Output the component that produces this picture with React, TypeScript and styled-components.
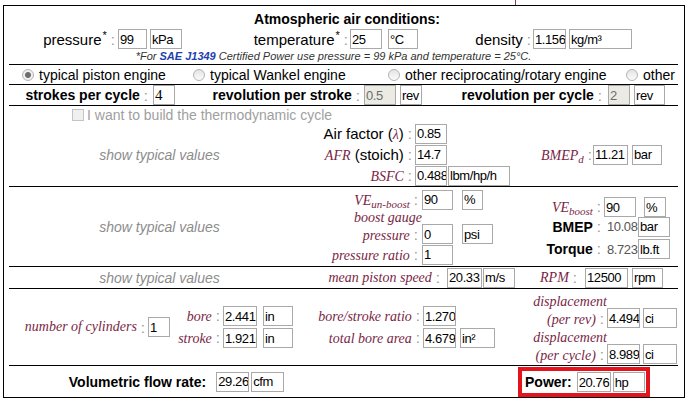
import React from 'react';
import styled, { createGlobalStyle } from 'styled-components';

const SANS = `'Liberation Sans', Arial, sans-serif`;
const SERIF = `'Liberation Serif', 'Times New Roman', serif`;
const MAROON = '#7a1f45';

const GlobalStyle = createGlobalStyle`
  html, body { margin: 0; padding: 0; background: #fff; }
  body { font-family: ${SANS}; font-size: 15px; color: #000; }
`;

const Frame = styled.div`
  position: relative;
  box-sizing: border-box;
  width: 682px;
  height: 393px;
  margin: 5px 0 0 3px;
  padding: 0 6px 0 5px;
  border: 1px solid #000;

  &::before {
    content: '';
    position: absolute;
    left: 511px;
    top: -6px;
    width: 1px;
    height: 5px;
    background: #8a3a62;
  }
`;

const Section = styled.section<{ $h: number; $last?: boolean }>`
  box-sizing: border-box;
  height: ${p => p.$h}px;
  border-bottom: ${p => (p.$last ? 'none' : '1px solid #000')};
`;

const Cols = styled.div<{ $cols: string; $h?: number; $pad?: number }>`
  display: grid;
  grid-template-columns: ${p => p.$cols};
  height: ${p => (p.$h ? `${p.$h}px` : '100%')};
  padding-left: ${p => p.$pad ?? 0}px;
  align-items: center;
`;

/* text pieces */
const Plain = styled.span`
  font: 15px ${SANS};
  color: #000;
`;
const B = styled.span`
  font: bold 14px ${SANS};
  color: #000;
`;
const M = styled.span`
  font: italic 14px ${SERIF};
  color: ${MAROON};
`;
const MSub = styled.sub`
  font-size: 11px;
  vertical-align: -3px;
  line-height: 0;
`;
const Star = styled.sup`
  font-size: 11px;
  vertical-align: 6px;
  line-height: 0;
  margin-left: 1px;
`;
const Colon = styled.span<{ $mr?: number }>`
  font: 15px ${SANS};
  color: #999;
  margin: 0 ${p => p.$mr ?? 3}px 0 4px;
`;
const Num = styled.span`
  display: inline-block;
  width: 31px;
  padding-left: 3px;
  font: 13px ${SANS};
  letter-spacing: -0.4px;
  color: #555;
`;

const Box = styled.input<{ $w: number; $ml?: number; $off?: boolean; $serif?: boolean }>`
  box-sizing: border-box;
  width: ${p => p.$w}px;
  height: 20px;
  margin: 0 0 0 ${p => p.$ml ?? 0}px;
  padding: 0 0 0 1px;
  border: 1px solid #a9a9a9;
  border-radius: 0;
  background: ${p => (p.$off ? '#ebebe4' : '#fff')};
  color: ${p => (p.$off ? '#6d6d6d' : '#000')};
  font: ${p => (p.$serif ? `15px ${SERIF}` : `13px ${SANS}`)};
  letter-spacing: ${p => (p.$serif ? 0 : -0.4)}px;
  outline: none;
`;

type ValProps = { v: string; w: number; ml?: number; off?: boolean; serif?: boolean };
const Val = ({ v, w, ml, off, serif }: ValProps) => (
  <Box readOnly value={v} $w={w} $ml={ml} $off={off} $serif={serif} />
);

/* a label + inputs, anchored in its cell */
const Field = styled.div<{ $align?: 'flex-end' | 'center' | 'flex-start'; $pr?: number }>`
  display: flex;
  align-items: center;
  justify-content: ${p => p.$align ?? 'flex-end'};
  padding-right: ${p => p.$pr ?? 0}px;
  white-space: nowrap;
`;

/* stacked fields with a right-aligned label column */
const Stack = styled.div<{ $label: number; $rows: string; $top?: number }>`
  display: grid;
  grid-template-columns: ${p => p.$label}px auto;
  grid-template-rows: ${p => p.$rows};
  align-items: center;
  align-self: ${p => (p.$top !== undefined ? 'start' : 'center')};
  margin-top: ${p => p.$top ?? 0}px;
`;
const SLabel = styled.div<{ $end?: boolean }>`
  text-align: right;
  line-height: 18px;
  white-space: nowrap;
  align-self: ${p => (p.$end ? 'end' : 'center')};
`;
const SVal = styled.div<{ $end?: boolean }>`
  display: flex;
  align-items: center;
  align-self: ${p => (p.$end ? 'end' : 'center')};
`;

/* atmosphere block */
const Atmos = styled.div`
  display: flex;
  flex-direction: column;
  align-items: center;
  padding-top: 4px;
`;
const Title = styled.div`
  font: bold 14px ${SANS};
  line-height: 18px;
  margin-left: 7px;
`;
const AtmosRow = styled.div`
  align-self: stretch;
  display: grid;
  grid-template-columns: 173px 236px 214px;
  height: 22px;
  align-items: center;
`;
const Note = styled.div`
  font: italic 11px ${SANS};
  line-height: 12px;
  color: #333;
  margin-right: 20px;
`;
const NoteLink = styled.span`
  color: #1f3fae;
  font-weight: bold;
`;

/* engine type radios */
const RadioItem = styled.label`
  display: flex;
  align-items: center;
  font: 14px ${SANS};
  white-space: nowrap;
`;
const Dot = styled.span<{ $on?: boolean }>`
  box-sizing: border-box;
  width: 12px;
  height: 12px;
  margin-right: 5px;
  border-radius: 50%;
  border: 1px solid #b4b4b4;
  background: ${p =>
    p.$on
      ? 'radial-gradient(circle, #6e6e6e 0 2.5px, #f0f0f0 3.5px)'
      : 'linear-gradient(#e4e4e4, #fbfbfb)'};
`;

const CheckRow = styled.div`
  display: flex;
  align-items: center;
  height: 17px;
  padding-left: 63px;
  font: 14px ${SANS};
  color: #a0a0a0;
`;
const CheckBox = styled.span`
  box-sizing: border-box;
  width: 12px;
  height: 12px;
  margin-right: 3px;
  border: 1px solid #c4c4c4;
  background: #f0f0f0;
`;

const Show = styled.div`
  font: italic 14px ${SANS};
  color: #8c8c8c;
  text-align: center;
  padding-right: 10px;
`;

const PowerBox = styled.div`
  box-sizing: border-box;
  justify-self: end;
  align-self: start;
  display: flex;
  align-items: center;
  width: 132px;
  height: 30px;
  margin: 1px 28px 0 0;
  padding-left: 3px;
  border: 4px solid #e3141b;
`;

const radios = [
  { text: 'typical piston engine', on: true },
  { text: 'typical Wankel engine' },
  { text: 'other reciprocating/rotary engine' },
  { text: 'other' },
];

export default function App() {
  return (
    <>
      <GlobalStyle />
      <Frame>
        <Section $h={59}>
          <Atmos>
            <Title>Atmospheric air conditions:</Title>
            <AtmosRow>
              <Field>
                <Plain>pressure<Star>*</Star></Plain>
                <Colon>:</Colon>
                <Val v="99" w={29} />
                <Val v="kPa" w={32} ml={3} />
              </Field>
              <Field>
                <Plain>temperature<Star>*</Star></Plain>
                <Colon $mr={2}>:</Colon>
                <Val v="25" w={32} />
                <Val v="°C" w={30} ml={6} />
              </Field>
              <Field>
                <Plain>density</Plain>
                <Colon $mr={2}>:</Colon>
                <Val v="1.156" w={33} />
                <Val v="kg/m³" w={63} ml={3} />
              </Field>
            </AtmosRow>
            <Note>
              *For <NoteLink>SAE J1349</NoteLink> Certified Power use pressure = 99 kPa and
              temperature = 25°C.
            </Note>
          </Atmos>
        </Section>

        <Section $h={20}>
          <Cols $cols="171px 195px 238px 1fr" $pad={13}>
            {radios.map(r => (
              <RadioItem key={r.text}>
                <Dot $on={r.on} />
                {r.text}
              </RadioItem>
            ))}
          </Cols>
        </Section>

        <Section $h={21}>
          <Cols $cols="166px 247px 243px">
            <Field>
              <B>strokes per cycle</B>
              <Colon $mr={5}>:</Colon>
              <Val v="4" w={22} serif />
            </Field>
            <Field>
              <B>revolution per stroke</B>
              <Colon $mr={4}>:</Colon>
              <Val v="0.5" w={32} off />
              <Val v="rev" w={22} ml={4} />
            </Field>
            <Field>
              <B>revolution per cycle</B>
              <Colon $mr={6}>:</Colon>
              <Val v="2" w={22} off />
              <Val v="rev" w={31} ml={4} />
            </Field>
          </Cols>
        </Section>

        <Section $h={81}>
          <CheckRow>
            <CheckBox />I want to build the thermodynamic cycle
          </CheckRow>
          <Cols $cols="311px 221px 1fr" $h={63}>
            <Show>show typical values</Show>
            <Stack $label={95} $rows="21px 21px 21px">
              <SLabel>
                <Plain>
                  Air factor (<M>λ</M>)
                </Plain>
                <Colon>:</Colon>
              </SLabel>
              <SVal>
                <Val v="0.85" w={32} />
              </SVal>
              <SLabel>
                <M>AFR</M>
                <Plain> (stoich)</Plain>
                <Colon>:</Colon>
              </SLabel>
              <SVal>
                <Val v="14.7" w={32} />
              </SVal>
              <SLabel>
                <M>BSFC</M>
                <Colon>:</Colon>
              </SLabel>
              <SVal>
                <Val v="0.488" w={32} />
                <Val v="lbm/hp/h" w={62} ml={1} />
              </SVal>
            </Stack>
            <Stack $label={52} $rows="21px">
              <SLabel>
                <M>
                  BMEP<MSub>d</MSub>
                </M>
                <Colon>:</Colon>
              </SLabel>
              <SVal>
                <Val v="11.21" w={35} />
                <Val v="bar" w={30} ml={4} />
              </SVal>
            </Stack>
          </Cols>
        </Section>

        <Section $h={80}>
          <Cols $cols="311px 221px 1fr">
            <Show>show typical values</Show>
            <Stack $label={102} $rows="21px 34px 21px" $top={2}>
              <SLabel>
                <M>
                  VE<MSub>un-boost</MSub>
                </M>
                <Colon $mr={4}>:</Colon>
              </SLabel>
              <SVal>
                <Val v="90" w={31} />
                <Val v="%" w={21} ml={9} />
              </SVal>
              <SLabel $end>
                <M>boost gauge</M>
                <br />
                <M>pressure</M>
                <Colon $mr={4}>:</Colon>
              </SLabel>
              <SVal $end>
                <Val v="0" w={31} />
                <Val v="psi" w={31} ml={9} />
              </SVal>
              <SLabel>
                <M>pressure ratio</M>
                <Colon $mr={4}>:</Colon>
              </SLabel>
              <SVal>
                <Val v="1" w={31} />
              </SVal>
            </Stack>
            <Stack $label={63} $rows="20px 19px 26px" $top={10}>
              <SLabel>
                <M>
                  VE<MSub>boost</MSub>
                </M>
                <Colon>:</Colon>
              </SLabel>
              <SVal>
                <Val v="90" w={32} />
                <Val v="%" w={22} ml={8} />
              </SVal>
              <SLabel>
                <B>BMEP</B>
                <Colon>:</Colon>
              </SLabel>
              <SVal>
                <Num>10.08</Num>
                <Val v="bar" w={32} />
              </SVal>
              <SLabel>
                <B>Torque</B>
                <Colon>:</Colon>
              </SLabel>
              <SVal>
                <Num>8.723</Num>
                <Val v="lb.ft" w={32} />
              </SVal>
            </Stack>
          </Cols>
        </Section>

        <Section $h={22}>
          <Cols $cols="311px 195px 148px">
            <Show>show typical values</Show>
            <Field>
              <M>mean piston speed</M>
              <Colon $mr={7}>:</Colon>
              <Val v="20.33" w={35} />
              <Val v="m/s" w={32} ml={1} />
            </Field>
            <Field>
              <M>RPM</M>
              <Colon $mr={8}>:</Colon>
              <Val v="12500" w={43} />
              <Val v="rpm" w={31} ml={4} />
            </Field>
          </Cols>
        </Section>

        <Section $h={77}>
          <Cols $cols="163px 123px 200px 1fr">
            <Field $pr={2}>
              <M>number of cylinders</M>
              <Colon>:</Colon>
              <Val v="1" w={22} />
            </Field>
            <Stack $label={51} $rows="22px 22px">
              <SLabel>
                <M>bore</M>
                <Colon>:</Colon>
              </SLabel>
              <SVal>
                <Val v="2.441" w={34} />
                <Val v="in" w={30} ml={6} />
              </SVal>
              <SLabel>
                <M>stroke</M>
                <Colon>:</Colon>
              </SLabel>
              <SVal>
                <Val v="1.921" w={34} />
                <Val v="in" w={30} ml={6} />
              </SVal>
            </Stack>
            <Stack $label={128} $rows="22px 22px">
              <SLabel>
                <M>bore/stroke ratio</M>
                <Colon>:</Colon>
              </SLabel>
              <SVal>
                <Val v="1.270" w={33} />
              </SVal>
              <SLabel>
                <M>total bore area</M>
                <Colon>:</Colon>
              </SLabel>
              <SVal>
                <Val v="4.679" w={33} />
                <Val v="in²" w={35} ml={4} />
              </SVal>
            </Stack>
            <Stack $label={112} $rows="36px 36px" $top={3}>
              <SLabel $end>
                <M>displacement</M>
                <br />
                <M>(per rev)</M>
                <Colon>:</Colon>
              </SLabel>
              <SVal $end>
                <Val v="4.494" w={33} />
                <Val v="ci" w={34} ml={3} />
              </SVal>
              <SLabel $end>
                <M>displacement</M>
                <br />
                <M>(per cycle)</M>
                <Colon>:</Colon>
              </SLabel>
              <SVal $end>
                <Val v="8.989" w={33} />
                <Val v="ci" w={34} ml={3} />
              </SVal>
            </Stack>
          </Cols>
        </Section>

        <Section $h={31} $last>
          <Cols $cols="335px 1fr">
            <Field $align="center">
              <B>Volumetric flow rate:</B>
              <Val v="29.26" w={33} ml={10} />
              <Val v="cfm" w={33} ml={2} />
            </Field>
            <PowerBox>
              <B>Power:</B>
              <Val v="20.76" w={34} ml={5} />
              <Val v="hp" w={32} ml={2} />
            </PowerBox>
          </Cols>
        </Section>
      </Frame>
    </>
  );
}
